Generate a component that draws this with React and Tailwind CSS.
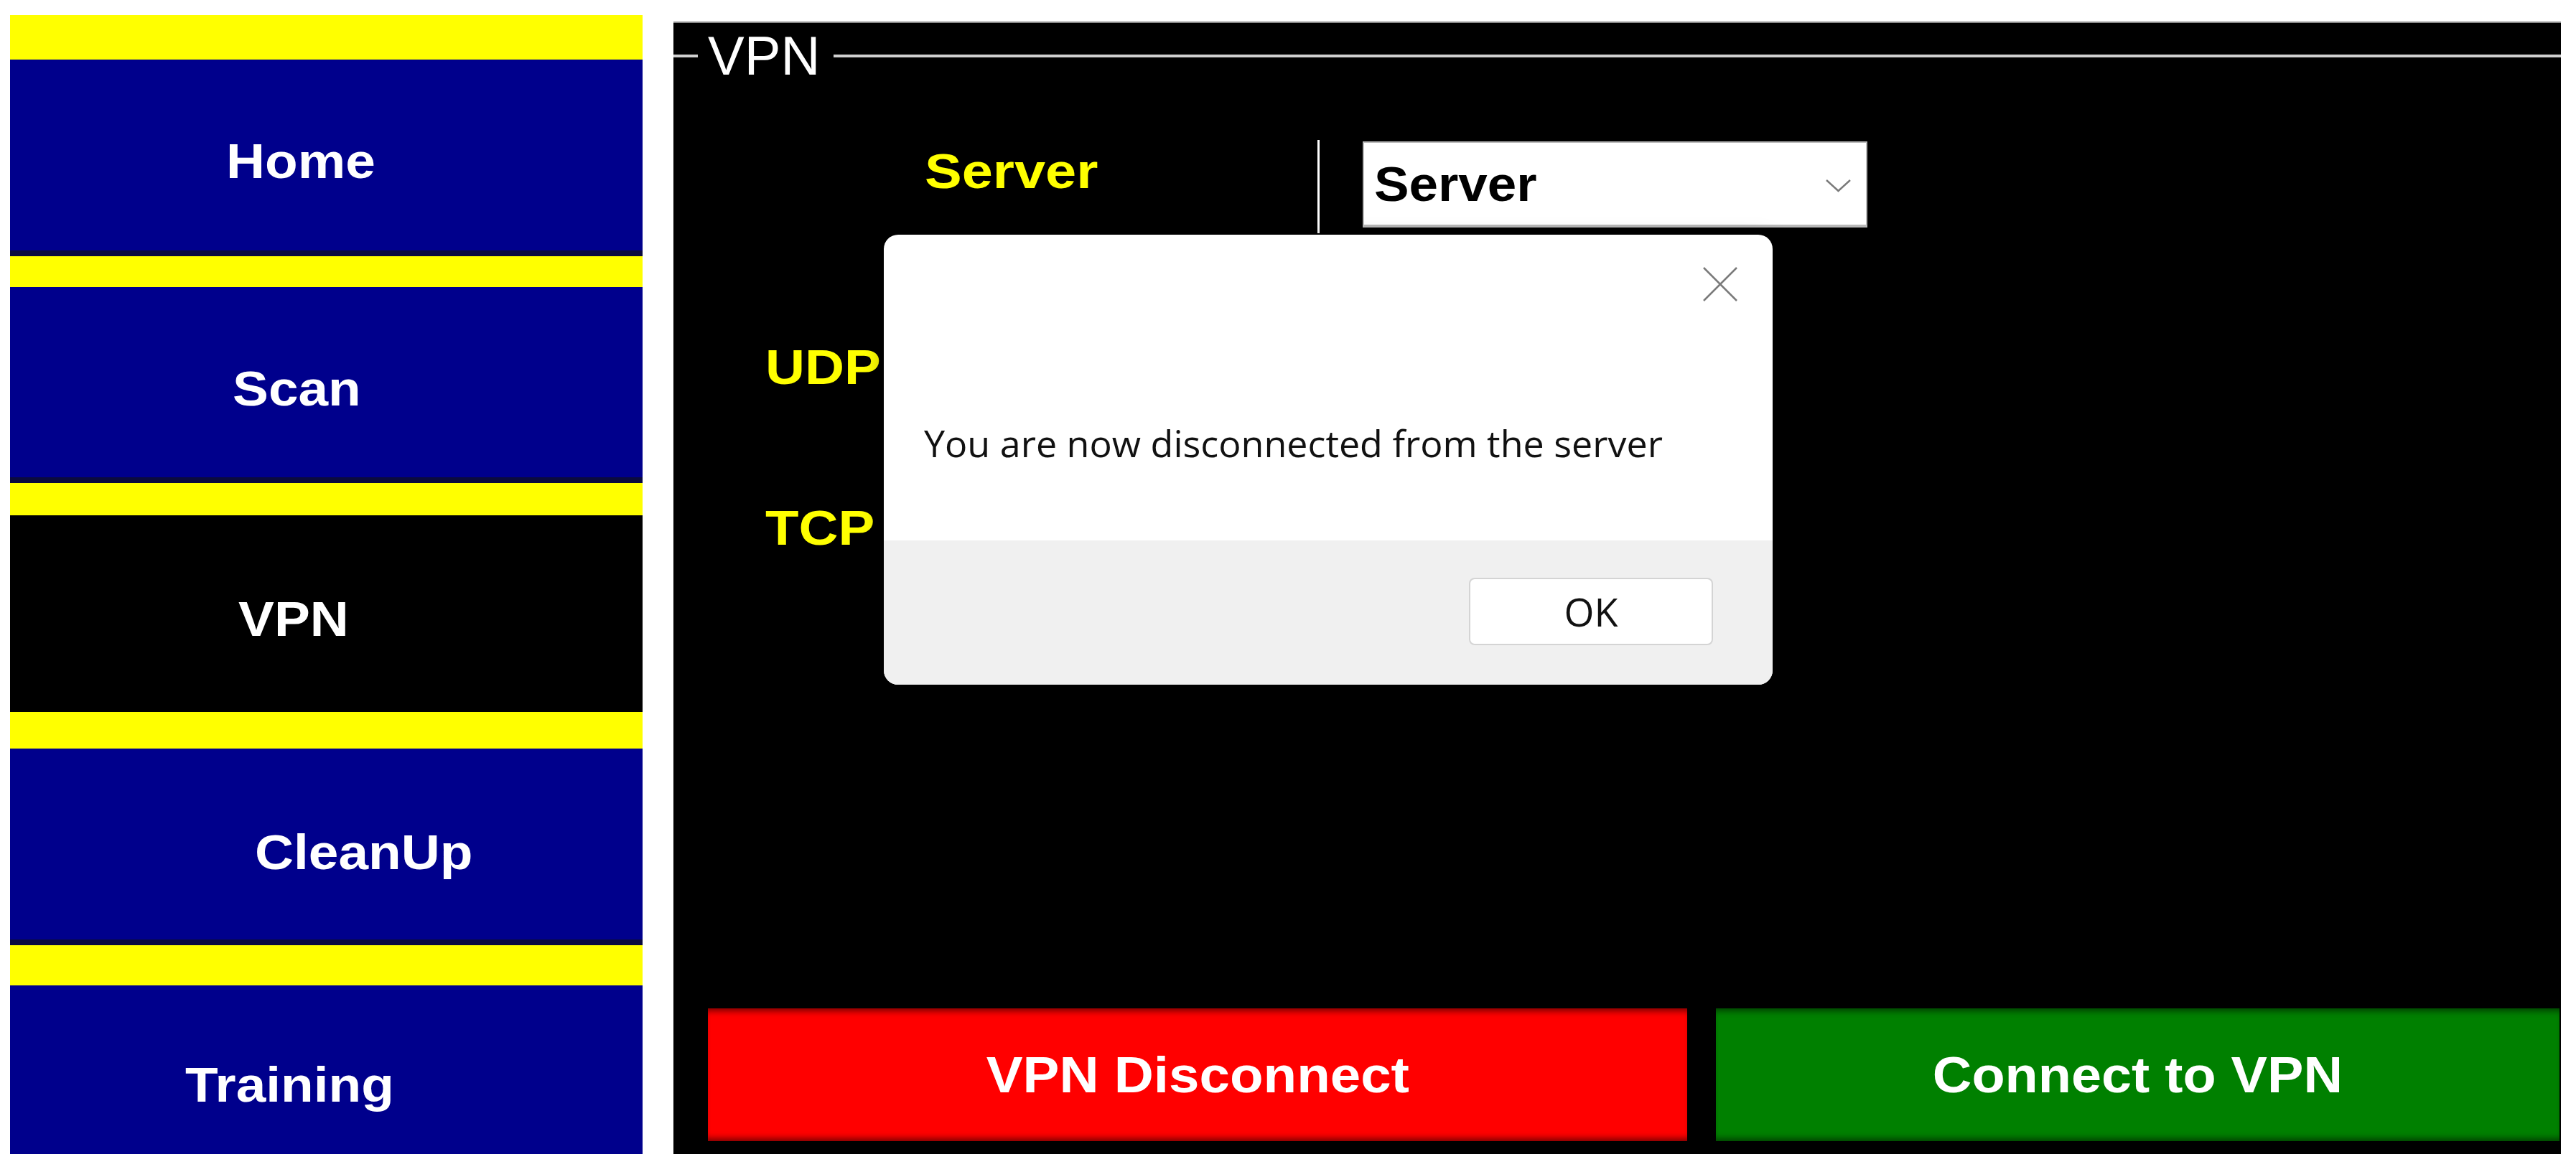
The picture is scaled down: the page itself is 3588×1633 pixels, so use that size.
import React from 'react';

const navItems = [
    { label: 'Home', box: 'h-[274px] bg-[#00008c] border-b-[8px] border-[#0b0b3e] pl-[301px] pt-[16px]' },
    { label: 'Scan', box: 'h-[273px] bg-[#00008c] border-b-[8px] border-[#0b0b3e] pl-[310px] pt-[17px]' },
    { label: 'VPN', box: 'h-[274px] bg-black pl-[318px] pt-[14px]' },
    { label: 'CleanUp', box: 'h-[274px] bg-[#00008c] border-b-[8px] border-[#0b0b3e] pl-[341px] pt-[22px]' },
    { label: 'Training', box: 'h-[235px] bg-[#00008c] pl-[244px] pt-[41px]' },
];

const separators = ['h-[62px]', 'h-[43px]', 'h-[45px]', 'h-[51px]', 'h-[56px]'];

function Sidebar() {
    return (
        <nav className="w-[881px] mt-[21px] ml-[14px] flex flex-col shrink-0">
            {navItems.map((item, i) => (
                <React.Fragment key={item.label}>
                    <div className={`${separators[i]} bg-[#ffff00]`} />
                    <button className={`${item.box} flex items-center text-left`}>
                        <span className="inline-block origin-left scale-x-[1.1] text-white font-bold text-[68px] leading-none font-['Liberation_Sans',Arial,sans-serif]">
                            {item.label}
                        </span>
                    </button>
                </React.Fragment>
            ))}
        </nav>
    );
}

function DisconnectDialog() {
    return (
        <div className="absolute left-[293px] top-[295px] w-[1238px] h-[627px] rounded-[20px] overflow-hidden bg-white shadow-[0_8px_30px_rgba(0,0,0,0.35)] flex flex-col font-['Open_Sans','Noto_Sans',sans-serif]">
            {/* Body */}
            <div className="h-[426px] flex flex-col">
                <div className="flex justify-end pt-[44px] pr-[46px]">
                    <svg width="54" height="50" viewBox="0 0 54 50" fill="none">
                        <line x1="4" y1="2" x2="50" y2="48" stroke="#7a7a7a" strokeWidth="2.5" />
                        <line x1="50" y1="2" x2="4" y2="48" stroke="#7a7a7a" strokeWidth="2.5" />
                    </svg>
                </div>
                <p className="mt-[170px] pl-[56px] text-[52px] leading-none text-[#111]">
                    You are now disconnected from the server
                </p>
            </div>

            {/* Footer */}
            <div className="flex-1 bg-[#f0f0f0] flex justify-end items-start pt-[52px] pr-[83px]">
                <button className="w-[340px] h-[94px] rounded-[8px] bg-white border-2 border-[#d4d4d4] text-[54px] leading-none text-[#111] flex items-center justify-center">
                    OK
                </button>
            </div>
        </div>
    );
}

function VpnPanel() {
    return (
        <section className="relative w-[2629px] h-[1578px] mt-[30px] ml-[43px] bg-black border-t-2 border-[#8a8a8a] flex flex-col font-['Liberation_Sans',Arial,sans-serif]">
            {/* Group box legend */}
            <div className="mt-[8px] h-[76px] flex items-center">
                <div className="w-[34px] h-[4px] bg-[#d0d0d0]" />
                <span className="pl-[14px] pr-[19px] text-white text-[76px] leading-none">VPN</span>
                <div className="flex-1 h-[4px] bg-[#d0d0d0]" />
            </div>

            {/* Server row */}
            <div className="mt-[79px] flex items-start">
                <div className="ml-[350px] mt-[9px] w-[547px]">
                    <span className="inline-block origin-left scale-x-[1.14] text-[#ffff00] font-bold text-[68px] leading-none">
                        Server
                    </span>
                </div>
                <div className="w-[3px] h-[130px] bg-white" />
                <div className="ml-[60px] mt-[2px] w-[703px] h-[120px] bg-white border-2 border-b-[4px] border-[#b8b8b8] flex items-center justify-between pl-[14px] pr-[20px]">
                    <span className="inline-block origin-left scale-x-[1.07] text-black font-bold text-[68px] leading-none">Server</span>
                    <svg width="37" height="20" viewBox="0 0 37 20" fill="none" className="mt-[6px]">
                        <polyline points="2,2 18.5,17 35,2" stroke="#7a7a7a" strokeWidth="2.5" />
                    </svg>
                </div>
            </div>

            {/* Port rows */}
            <div className="ml-[128px] mt-[152px]">
                <span className="inline-block origin-left scale-x-[1.12] text-[#ffff00] font-bold text-[68px] leading-none">UDP Port</span>
            </div>
            <div className="ml-[128px] mt-[156px]">
                <span className="inline-block origin-left scale-x-[1.12] text-[#ffff00] font-bold text-[68px] leading-none">TCP Port</span>
            </div>

            {/* Actions */}
            <div className="mt-auto mb-[18px] ml-[48px] mr-[2px] flex gap-[40px]">
                <button className="w-[1364px] h-[185px] bg-[#ff0000] shadow-[inset_0_10px_8px_-6px_rgba(90,0,0,0.8),inset_0_-10px_8px_-6px_rgba(90,0,0,0.8)] flex items-center justify-center">
                    <span className="inline-block scale-x-[1.09] text-white font-bold text-[70px] leading-none">VPN Disconnect</span>
                </button>
                <button className="flex-1 h-[185px] bg-[#008000] shadow-[inset_0_10px_8px_-6px_rgba(0,50,0,0.8),inset_0_-10px_8px_-6px_rgba(0,50,0,0.8)] flex items-center justify-center">
                    <span className="inline-block scale-x-[1.08] text-white font-bold text-[70px] leading-none">Connect to VPN</span>
                </button>
            </div>

            <DisconnectDialog />
        </section>
    );
}

export default function App() {
    return (
        <div className="w-full h-[1633px] bg-white flex overflow-hidden">
            <Sidebar />
            <VpnPanel />
        </div>
    );
}
